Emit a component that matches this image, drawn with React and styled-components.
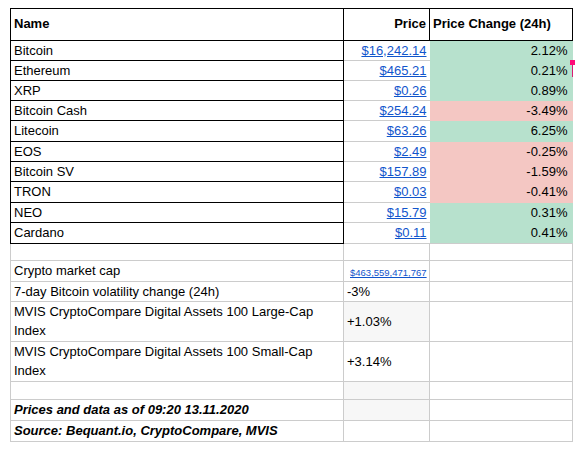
import React from "react"
import styled, { createGlobalStyle } from "styled-components"

const coins = [
  { name: "Bitcoin", price: "$16,242.14", change: "2.12%", up: true, h: 20 },
  { name: "Ethereum", price: "$465.21", change: "0.21%", up: true, h: 20, mark: true },
  { name: "XRP", price: "$0.26", change: "0.89%", up: true, h: 20 },
  { name: "Bitcoin Cash", price: "$254.24", change: "-3.49%", up: false, h: 20 },
  { name: "Litecoin", price: "$63.26", change: "6.25%", up: true, h: 21 },
  { name: "EOS", price: "$2.49", change: "-0.25%", up: false, h: 20 },
  { name: "Bitcoin SV", price: "$157.89", change: "-1.59%", up: false, h: 20 },
  { name: "TRON", price: "$0.03", change: "-0.41%", up: false, h: 21 },
  { name: "NEO", price: "$15.79", change: "0.31%", up: true, h: 20 },
  { name: "Cardano", price: "$0.11", change: "0.41%", up: true, h: 21 },
]

export default function App() {
  return (
    <>
      <GlobalStyle />
      <Sheet>
        <colgroup>
          <col style={{ width: 333 }} />
          <col style={{ width: 86 }} />
          <col style={{ width: 143 }} />
        </colgroup>
        <tbody>
          <Row $h={32}>
            <HeadCell>Name</HeadCell>
            <HeadCell $align="right">Price</HeadCell>
            <HeadCell>Price Change (24h)</HeadCell>
          </Row>

          {coins.map((coin) => (
            <Row key={coin.name} $h={coin.h}>
              <NameCell>{coin.name}</NameCell>
              <PriceCell>
                <PriceLink href="#">{coin.price}</PriceLink>
              </PriceCell>
              <ChangeCell $up={coin.up}>
                {coin.change}
                {coin.mark && (
                  <>
                    <MarkDot />
                    <MarkLine />
                  </>
                )}
              </ChangeCell>
            </Row>
          ))}

          <Row $h={17}>
            <InfoCell />
            <InfoCell />
            <InfoCell />
          </Row>
          <Row $h={21}>
            <InfoCell>Crypto market cap</InfoCell>
            <InfoCell $valign="bottom">
              <CapLink href="#">$463,559,471,767</CapLink>
            </InfoCell>
            <InfoCell />
          </Row>
          <Row $h={20}>
            <InfoCell>7-day Bitcoin volatility change (24h)</InfoCell>
            <InfoCell>-3%</InfoCell>
            <InfoCell />
          </Row>
          <Row $h={40}>
            <InfoCell $wrap>MVIS CryptoCompare Digital Assets 100 Large-Cap Index</InfoCell>
            <InfoCell $shade>+1.03%</InfoCell>
            <InfoCell />
          </Row>
          <Row $h={39}>
            <InfoCell $wrap>MVIS CryptoCompare Digital Assets 100 Small-Cap Index</InfoCell>
            <InfoCell>+3.14%</InfoCell>
            <InfoCell />
          </Row>
          <Row $h={18}>
            <InfoCell />
            <InfoCell $shade />
            <InfoCell />
          </Row>
          <Row $h={21}>
            <InfoCell $note>Prices and data as of 09:20 13.11.2020</InfoCell>
            <InfoCell $shade />
            <InfoCell />
          </Row>
          <Row $h={21}>
            <InfoCell $note>Source: Bequant.io, CryptoCompare, MVIS</InfoCell>
            <InfoCell />
            <InfoCell />
          </Row>
        </tbody>
      </Sheet>
    </>
  )
}

const GlobalStyle = createGlobalStyle`
  body {
    margin: 0;
    background: #fff;
  }
`

const Sheet = styled.table`
  margin: 8px 0 0 10px;
  border-collapse: collapse;
  table-layout: fixed;
  width: 563px;
  font-family: "Liberation Sans", Arial, sans-serif;
  font-size: 13px;
  color: #000;
`

const Row = styled.tr`
  height: ${(p) => p.$h}px;
`

const Cell = styled.td`
  padding: 0 3px;
  line-height: 15px;
  white-space: nowrap;
  overflow: visible;
  vertical-align: middle;
`

const HeadCell = styled(Cell)`
  border: 1px solid #000;
  font-weight: bold;
  text-align: ${(p) => p.$align || "left"};
  padding-bottom: 3px;
`

const NameCell = styled(Cell)`
  border: 1px solid #000;
  padding-bottom: 1px;
`

const PriceCell = styled(Cell)`
  border-bottom: 1px solid #ccc;
  text-align: right;
  padding-bottom: 1px;
`

const PriceLink = styled.a`
  color: #1155cc;
  text-decoration: underline;
`

const ChangeCell = styled(Cell)`
  position: relative;
  background: ${(p) => (p.$up ? "#b7e1cd" : "#f4c7c3")};
  text-align: right;
  padding: 0 5px 1px 3px;
`

const MarkDot = styled.span`
  position: absolute;
  top: -1px;
  right: -2px;
  width: 5px;
  height: 5px;
  background: #ff0a78;
`

const MarkLine = styled.span`
  position: absolute;
  top: 4px;
  right: 0;
  width: 1px;
  height: 12px;
  background: #d81b72;
`

const InfoCell = styled(Cell)`
  border: 1px solid #ccc;
  background: ${(p) => (p.$shade ? "#f7f7f7" : "transparent")};
  white-space: ${(p) => (p.$wrap ? "normal" : "nowrap")};
  line-height: ${(p) => (p.$wrap ? "19px" : "15px")};
  vertical-align: ${(p) => p.$valign || "middle"};
  font-weight: ${(p) => (p.$note ? "bold" : "normal")};
  font-style: ${(p) => (p.$note ? "italic" : "normal")};
  padding-bottom: ${(p) => (p.$valign === "bottom" ? "2px" : "1px")};
`

const CapLink = styled.a`
  display: inline-block;
  padding-left: 3px;
  font-size: 9.5px;
  line-height: 11px;
  color: #1155cc;
  text-decoration: underline;
`
